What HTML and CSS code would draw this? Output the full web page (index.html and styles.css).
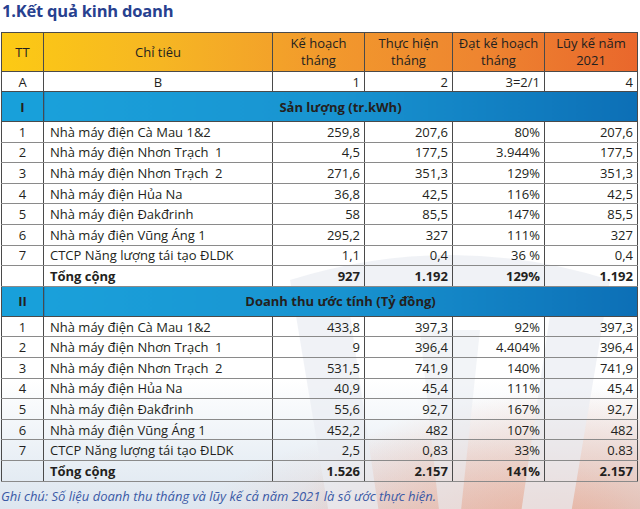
FILE: index.html
```html
<!DOCTYPE html>
<html lang="vi">
<head>
<meta charset="utf-8">
<title>Kết quả kinh doanh</title>
<link rel="stylesheet" href="styles.css">
</head>
<body>
<div class="page">
  <svg class="wm" width="360" height="300" viewBox="0 0 360 300" aria-hidden="true">
    <path d="M20 60 Q180 10 340 60 L300 300 L250 300 L280 95 Q180 70 80 95 L110 300 L60 300 Z" fill="#e9edf2" opacity="0.7"/>
    <path d="M150 110 L210 110 L190 300 L170 300 Z" fill="#e9edf2" opacity="0.6"/>
  </svg>
  <h1 class="title">1.Kết quả kinh doanh</h1>
  <table class="kq">
    <colgroup>
      <col class="c-tt"><col class="c-name"><col class="c-kh"><col class="c-th"><col class="c-dat"><col class="c-lk">
    </colgroup>
    <thead>
      <tr class="head">
        <th>TT</th><th>Chỉ tiêu</th><th>Kế hoạch<br>tháng</th><th>Thực hiện<br>tháng</th><th>Đạt kế hoạch<br>tháng</th><th>Lũy kế năm<br>2021</th>
      </tr>
      <tr class="idx">
        <td class="ctr">A</td><td class="ctr">B</td><td>1</td><td>2</td><td>3=2/1</td><td>4</td>
      </tr>
    </thead>
    <tbody>
      <tr class="sec"><td class="ctr">I</td><td colspan="5" class="ctr">Sản lượng (tr.kWh)</td></tr>
      <tr><td class="ctr">1</td><td class="nm">Nhà máy điện Cà Mau 1&amp;2</td><td>259,8</td><td>207,6</td><td>80%</td><td>207,6</td></tr>
      <tr><td class="ctr">2</td><td class="nm">Nhà máy điện Nhơn Trạch&nbsp; 1</td><td>4,5</td><td>177,5</td><td>3.944%</td><td>177,5</td></tr>
      <tr><td class="ctr">3</td><td class="nm">Nhà máy điện Nhơn Trạch&nbsp; 2</td><td>271,6</td><td>351,3</td><td>129%</td><td>351,3</td></tr>
      <tr><td class="ctr">4</td><td class="nm">Nhà máy điện Hủa Na</td><td>36,8</td><td>42,5</td><td>116%</td><td>42,5</td></tr>
      <tr><td class="ctr">5</td><td class="nm">Nhà máy điện Đakđrinh</td><td>58</td><td>85,5</td><td>147%</td><td>85,5</td></tr>
      <tr><td class="ctr">6</td><td class="nm">Nhà máy điện Vũng Áng 1</td><td>295,2</td><td>327</td><td>111%</td><td>327</td></tr>
      <tr><td class="ctr">7</td><td class="nm">CTCP Năng lượng tái tạo ĐLDK</td><td>1,1</td><td>0,4</td><td>36 %</td><td>0,4</td></tr>
      <tr class="tot"><td></td><td class="nm">Tổng cộng</td><td>927</td><td>1.192</td><td>129%</td><td>1.192</td></tr>
      <tr class="sec"><td class="ctr">II</td><td colspan="5" class="ctr">Doanh thu ước tính (Tỷ đồng)</td></tr>
      <tr><td class="ctr">1</td><td class="nm">Nhà máy điện Cà Mau 1&amp;2</td><td>433,8</td><td>397,3</td><td>92%</td><td>397,3</td></tr>
      <tr><td class="ctr">2</td><td class="nm">Nhà máy điện Nhơn Trạch&nbsp; 1</td><td>9</td><td>396,4</td><td>4.404%</td><td>396,4</td></tr>
      <tr><td class="ctr">3</td><td class="nm">Nhà máy điện Nhơn Trạch&nbsp; 2</td><td>531,5</td><td>741,9</td><td>140%</td><td>741,9</td></tr>
      <tr><td class="ctr">4</td><td class="nm">Nhà máy điện Hủa Na</td><td>40,9</td><td>45,4</td><td>111%</td><td>45,4</td></tr>
      <tr><td class="ctr">5</td><td class="nm">Nhà máy điện Đakđrinh</td><td>55,6</td><td>92,7</td><td>167%</td><td>92,7</td></tr>
      <tr><td class="ctr">6</td><td class="nm">Nhà máy điện Vũng Áng 1</td><td>452,2</td><td>482</td><td>107%</td><td>482</td></tr>
      <tr><td class="ctr">7</td><td class="nm">CTCP Năng lượng tái tạo ĐLDK</td><td>2,5</td><td>0,83</td><td>33%</td><td>0.83</td></tr>
      <tr class="tot"><td></td><td class="nm">Tổng cộng</td><td>1.526</td><td>2.157</td><td>141%</td><td>2.157</td></tr>
    </tbody>
  </table>
  <p class="note">Ghi chú: Số liệu doanh thu tháng và lũy kế cả năm 2021 là số ước thực hiện.</p>
</div>
</body>
</html>
```
FILE: styles.css
```css
html, body {
  margin: 0;
  padding: 0;
}
body {
  width: 640px;
  height: 509px;
  overflow: hidden;
  font-family: "Open Sans", "Noto Sans", sans-serif;
  color: #231f20;
  background:
    radial-gradient(ellipse 280px 140px at 570px 530px, rgba(240,140,100,0.55), rgba(240,140,100,0) 100%),
    radial-gradient(ellipse 220px 100px at 420px 530px, rgba(245,175,150,0.35), rgba(245,175,150,0) 100%),
    linear-gradient(180deg, #ffffff 0px, #ffffff 380px, #e6edf4 470px, #dde6ef 509px);
}
.page {
  position: relative;
  padding: 0 2px 0 1px;
}
.wm {
  position: absolute;
  left: 270px;
  top: 220px;
  z-index: 0;
}
.title, .kq, .note {
  position: relative;
  z-index: 1;
}
.title {
  margin: 0;
  padding: 1px 0 0 1px;
  height: 32px;
  box-sizing: border-box;
  font-size: 16.5px;
  font-weight: 700;
  color: #27418f;
  line-height: 20px;
  letter-spacing: -0.2px;
}
.kq {
  width: 636px;
  border-collapse: collapse;
  table-layout: fixed;
  font-size: 13px;
}
.c-tt { width: 42px; }
.c-name { width: 229px; }
.c-kh { width: 92px; }
.c-th { width: 88px; }
.c-dat { width: 92px; }
.c-lk { width: 93px; }
.kq th, .kq td {
  border: 1px solid #4a4a4a;
  padding: 0 4px;
  line-height: 16px;
  text-align: right;
  white-space: nowrap;
  overflow: hidden;
}
.kq tbody tr { height: 20.6px; }
.kq tr.idx { height: 20px; }
.kq tr.head { height: 39px; }
.kq tbody td {
  border-top-color: #8a8a8a;
  border-bottom-color: #8a8a8a;
}
.kq th {
  font-weight: 400;
  text-align: center;
  line-height: 17px;
  padding: 0;
}
.head {
  background: linear-gradient(90deg, #fcca14 0%, #f6b623 25%, #f29a2c 50%, #ee8530 75%, #e9672c 100%);
}
.kq td.ctr { text-align: center; padding: 0; }
.kq td.nm { text-align: left; padding-left: 6px; }
.kq tbody tr.sec { height: 30px; }
.kq tr.sec td {
  background: linear-gradient(90deg, #1aa0da 0%, #1893d0 50%, #0c6fb6 100%);
  font-weight: 700;
  border-color: #4a4a4a;
}
.kq tr.sec td:first-child {
  background: #18a0da;
}
.kq tr.tot td {
  font-weight: 700;
}
.note {
  margin: 5px 0 0 0;
  font-size: 13px;
  line-height: 18px;
  font-style: italic;
  color: #3b5aa6;
}
```
